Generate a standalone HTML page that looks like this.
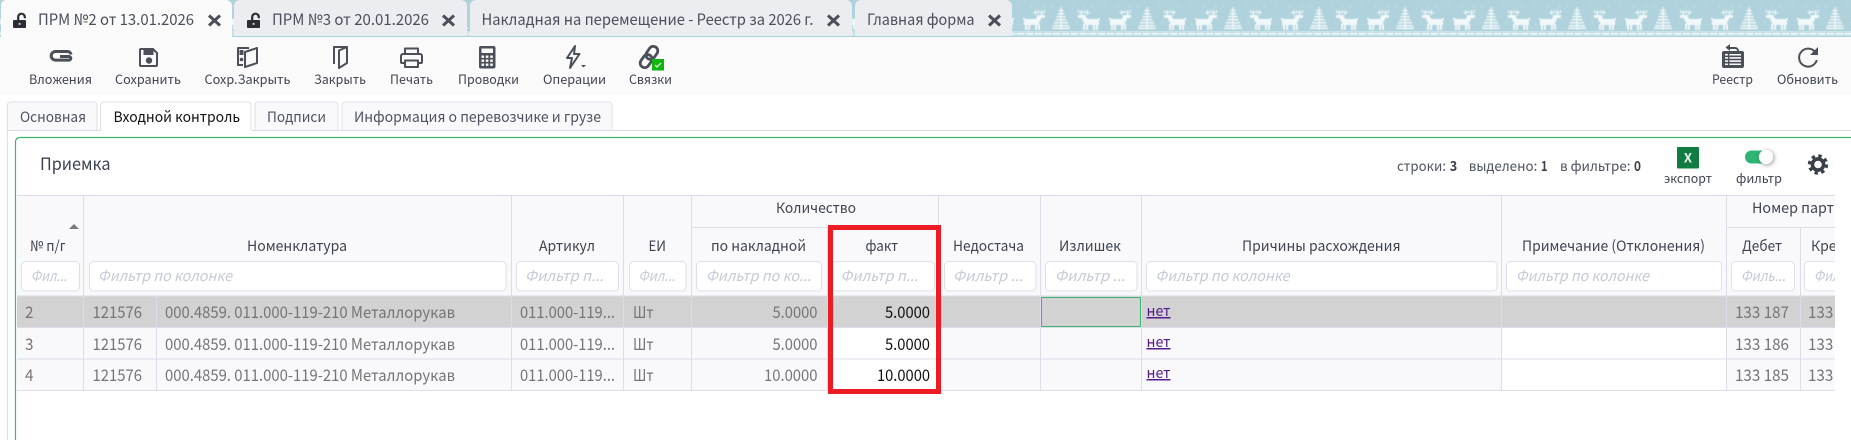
<!DOCTYPE html>
<html lang="ru"><head><meta charset="utf-8"><title>ПРМ №2 от 13.01.2026</title>
<style>
html,body{margin:0;padding:0;background:#fff;width:1851px;height:440px;overflow:hidden}
svg{display:block}
text{font-family:"Noto Sans CJK SC","Liberation Sans",sans-serif;white-space:pre}
.tt{font-size:15.5px;fill:#4a4f5b}
.tb{font-size:12.5px;fill:#3f4450}
.mt{font-size:14.5px;fill:#4d5360}
.th{font-size:14.5px;fill:#3f4450}
.ph{font-size:14.5px;fill:#c5cad6;font-style:italic}
.td{font-size:16px;fill:#757575}
.fa{font-size:16px;fill:#111}
.ln{font-size:15px;fill:#551a8b;text-decoration:underline}
.st{font-size:14px;fill:#4d5360}
.sb{font-size:14px;fill:#3a3f4a;font-weight:700}
.inp{fill:#fff;stroke:#dfe1ea;stroke-width:1}
.ic{fill:none;stroke:#4b4f58;stroke-width:2;stroke-linejoin:round}
.f{fill:#4b4f58}
.x{stroke:#4b4f58;stroke-width:3;fill:none}
</style></head><body>
<svg xmlns="http://www.w3.org/2000/svg" width="1851" height="440" viewBox="0 0 1851 440">
<defs>
<g id="d" fill="#f1f8fa">
<rect x="1" y="9" width="15" height="6"/><rect x="2" y="15" width="2" height="5"/><rect x="5" y="14" width="2" height="6"/><rect x="12" y="14" width="2" height="6"/><rect x="15" y="14" width="2" height="6"/>
<path d="M12 10L15 5H19L17 12Z"/><rect x="14" y="5" width="8" height="3"/><rect x="0" y="8" width="2" height="2"/>
<rect x="12" y="0" width="1.2" height="5"/><rect x="18" y="0" width="1.2" height="5"/><rect x="10" y="2" width="6" height="1"/><rect x="16" y="2" width="6" height="1"/><rect x="15" y="0" width="1" height="3"/><rect x="21" y="0" width="1" height="3"/>
</g>
<pattern id="p" width="86" height="37" patternUnits="userSpaceOnUse" x="17" y="0">
<g fill="#f1f8fa">
<rect x="11.5" y="7" width="1.2" height="23"/>
<rect x="9.5" y="10" width="5" height="1.5"/><rect x="8.5" y="13" width="7" height="1.5"/><rect x="7.5" y="16" width="9" height="1.5"/><rect x="6.5" y="19" width="11" height="1.5"/><rect x="5" y="22" width="14" height="1.5"/><rect x="4" y="25" width="16" height="1.5"/><rect x="3" y="27.5" width="18" height="1.5"/>
</g>
<use href="#d" transform="translate(51 10) scale(-1 1)"/>
<use href="#d" transform="translate(60 10)"/>
<g fill="#fff" opacity=".7"><rect x="2" y="6" width="1" height="1"/><rect x="24" y="5" width="1" height="1"/><rect x="35" y="7" width="1" height="1"/><rect x="55" y="5" width="1" height="1"/><rect x="27" y="22" width="1" height="1"/><rect x="56" y="24" width="1" height="1"/><rect x="80" y="6" width="1" height="1"/><rect x="43" y="6" width="1" height="1"/><rect x="68" y="6" width="1" height="1"/></g>
</pattern>
<pattern id="b" width="9" height="5" patternUnits="userSpaceOnUse" x="0" y="31">
<rect width="9" height="5" fill="#c9e2e8"/><rect x="0" y="2" width="7" height="1.4" fill="#eef7f9"/>
</pattern>
<clipPath id="tc"><rect x="17" y="195" width="1818" height="245"/></clipPath>
<clipPath id="c1"><rect x="17" y="230" width="48" height="30"/></clipPath>
</defs>

<!-- top tab bar -->
<rect x="0" y="0" width="1851" height="37" fill="#afd2dc"/>
<rect x="0" y="0" width="1851" height="31" fill="url(#p)" style="filter:blur(.45px)"/>
<rect x="0" y="31" width="1851" height="5" fill="url(#b)"/>
<rect x="0" y="36" width="1851" height="1" fill="#a9d3dc"/>

<path d="M1 36V5a5 5 0 0 1 5-5H226a6 6 0 0 1 6 6V37H1Z" fill="#fafafa"/>
<path d="M234 36V6a6 6 0 0 1 6-6H461a6 6 0 0 1 6 6V36Z" fill="#ecedf1"/>
<path d="M470 36V6a6 6 0 0 1 6-6H846a6 6 0 0 1 6 6V36Z" fill="#ecedf1"/>
<path d="M855 36V6a6 6 0 0 1 6-6H1006a6 6 0 0 1 6 6V36Z" fill="#ecedf1"/>

<g id="lk"><rect x="13" y="20" width="13" height="8" rx="1" fill="#2a2d34"/><path d="M18.2 20V17a3.3 3.3 0 0 1 6.6 0v1.2" fill="none" stroke="#2a2d34" stroke-width="2.2"/><rect x="18.7" y="23" width="1.8" height="1.8" fill="#ddd"/></g>
<use href="#lk" x="234"/>

<text class="tt" x="38" y="25" textLength="156" lengthAdjust="spacingAndGlyphs">ПРМ №2 от 13.01.2026</text>
<text class="tt" x="272" y="25" textLength="157" lengthAdjust="spacingAndGlyphs">ПРМ №3 от 20.01.2026</text>
<text class="tt" x="481.5" y="25" textLength="332" lengthAdjust="spacingAndGlyphs">Накладная на перемещение - Реестр за 2026 г.</text>
<text class="tt" x="867" y="25" textLength="107.5" lengthAdjust="spacingAndGlyphs">Главная форма</text>
<path class="x" d="M209 15.5l11 10m0-10l-11 10M443 15.5l11 10m0-10l-11 10M828 15.5l11 10m0-10l-11 10M989 15.5l11 10m0-10l-11 10"/>

<!-- toolbar -->
<rect x="0" y="37" width="1851" height="57" fill="#fafafa"/>
<path fill="none" stroke="#4b4f58" stroke-width="3" d="M60 56.5h9a1.8 1.8 0 0 1 0 3.6H55.5a4.3 4.3 0 0 1 0-8.6h12a3.5 3.5 0 0 1 3.5 3"/>
<path class="ic" stroke-width="2.2" d="M140 50a1 1 0 0 1 1-1h12l4 4v12a1 1 0 0 1-1 1h-15a1 1 0 0 1-1-1Z"/><rect class="f" x="143.5" y="50" width="10" height="5"/><circle class="f" cx="149" cy="60.5" r="3.2"/>
<path class="ic" stroke-width="2.2" d="M249 48H238V65H243"/><path class="ic" stroke-width="2.2" d="M245 52L257 48V63L245 67Z"/><rect class="f" x="239.5" y="50" width="4" height="5"/><circle class="f" cx="241.5" cy="59.5" r="1.8"/>
<path class="ic" stroke-width="2.2" d="M334 64V47H347V63L339 68V50.5L347 47"/>
<path class="ic" stroke-width="2.6" d="M405 53V48.5H418V53M405 63H402a1 1 0 0 1-1-1V56a2 2 0 0 1 2-2H420a2 2 0 0 1 2 2V62a1 1 0 0 1-1 1H418M405 60.5H418V67H405Z"/>
<rect class="f" x="479" y="46" width="16.5" height="22.5" rx="2"/><rect x="481.5" y="48.5" width="11.5" height="4.5" fill="#fafafa"/>
<g fill="#fafafa"><rect x="481.5" y="55.5" width="2.6" height="2.4"/><rect x="485.8" y="55.5" width="2.6" height="2.4"/><rect x="490.2" y="55.5" width="2.6" height="2.4"/><rect x="481.5" y="59.5" width="2.6" height="2.4"/><rect x="485.8" y="59.5" width="2.6" height="2.4"/><rect x="490.2" y="59.5" width="2.6" height="2.4"/><rect x="481.5" y="63.5" width="2.6" height="2.4"/><rect x="485.8" y="63.5" width="2.6" height="2.4"/><rect x="490.2" y="63.5" width="2.6" height="2.4"/></g>
<path class="ic" stroke-width="2.6" d="M575 46L567 58H572L570 68L579.5 54H574Z"/><path class="f" d="M581 65h5l-2.5 2.5Z"/>
<g transform="rotate(-55 649 57)" fill="none" stroke="#4b4f58" stroke-width="2.8"><rect x="637" y="52.5" width="14" height="9" rx="4.5"/><rect x="647" y="52.5" width="14" height="9" rx="4.5"/></g>
<rect x="652" y="59" width="12" height="11.5" fill="#0db50d"/><path d="M655 65l2 2 4-4" fill="none" stroke="#bff0bf" stroke-width="1.5"/>
<path class="f" d="M1730 44l-4.5 3.5 4.5 3.5v-2h5a2 2 0 0 1 2 2h2a4 4 0 0 0-4-4h-5Z"/><rect class="f" x="1722" y="51" width="22" height="17" rx="2"/><rect x="1725" y="54" width="16" height="11" fill="#fafafa"/><g class="f"><rect x="1725" y="55.5" width="16" height="1.6"/><rect x="1725" y="58.7" width="16" height="1.6"/><rect x="1725" y="61.9" width="16" height="1.6"/><rect x="1728" y="54" width="1.4" height="11"/></g>
<path class="ic" stroke-width="2.2" d="M1815.5 52.5A9 9 0 1 0 1816.8 60"/><path class="f" d="M1818 47v8h-8Z"/>

<g class="tb">
<text class="tb" x="29" y="84" textLength="63" lengthAdjust="spacingAndGlyphs">Вложения</text>
<text class="tb" x="115" y="84" textLength="66" lengthAdjust="spacingAndGlyphs">Сохранить</text>
<text class="tb" x="204.5" y="84" textLength="86" lengthAdjust="spacingAndGlyphs">Сохр.Закрыть</text>
<text class="tb" x="314" y="84" textLength="52" lengthAdjust="spacingAndGlyphs">Закрыть</text>
<text class="tb" x="390" y="84" textLength="43" lengthAdjust="spacingAndGlyphs">Печать</text>
<text class="tb" x="458" y="84" textLength="61" lengthAdjust="spacingAndGlyphs">Проводки</text>
<text class="tb" x="543" y="84" textLength="63" lengthAdjust="spacingAndGlyphs">Операции</text>
<text class="tb" x="629" y="84" textLength="43" lengthAdjust="spacingAndGlyphs">Связки</text>
<text class="tb" x="1712" y="84" textLength="41" lengthAdjust="spacingAndGlyphs">Реестр</text>
<text class="tb" x="1777" y="84" textLength="61" lengthAdjust="spacingAndGlyphs">Обновить</text>
</g>

<!-- main tabs -->
<rect x="0" y="94" width="1851" height="346" fill="#fff"/>
<rect x="7" y="130" width="1844" height="1" fill="#d8dbe6"/>
<rect x="7" y="130" width="1" height="310" fill="#dfe1ea"/>
<g fill="#f9f9fb" stroke="#dfe1ea"><path d="M7.5 130V105a3 3 0 0 1 3-3H94a3 3 0 0 1 3 3V130"/><path d="M255 130V105a3 3 0 0 1 3-3H335a3 3 0 0 1 3 3V130"/><path d="M342 130V105a3 3 0 0 1 3-3H609a3 3 0 0 1 3 3V130"/></g>
<path d="M100.5 131V105a3 3 0 0 1 3-3H248a3 3 0 0 1 3 3V131" fill="#fff" stroke="#dfe1ea"/><rect x="101" y="129" width="150" height="3" fill="#fff"/>
<text class="mt" x="20" y="122" textLength="66" lengthAdjust="spacingAndGlyphs">Основная</text>
<text class="mt" style="fill:#111" x="113.5" y="122" textLength="126.5" lengthAdjust="spacingAndGlyphs">Входной контроль</text>
<text class="mt" x="267" y="122" textLength="59" lengthAdjust="spacingAndGlyphs">Подписи</text>
<text class="mt" x="354" y="122" textLength="247" lengthAdjust="spacingAndGlyphs">Информация о перевозчике и грузе</text>

<!-- panel -->
<path d="M15.5 440V141.5a4 4 0 0 1 4-4H1851" fill="#fff" stroke="#3cb371" stroke-width="1.2"/>
<text style="font-size:17px;fill:#3a4150" x="40" y="170" textLength="70.5" lengthAdjust="spacingAndGlyphs">Приемка</text>

<text class="st" x="1397" y="171" textLength="49" lengthAdjust="spacingAndGlyphs">строки:</text><text class="sb" x="1449.7" y="171" textLength="7.5" lengthAdjust="spacingAndGlyphs">3</text>
<text class="st" x="1468.8" y="171" textLength="68.5" lengthAdjust="spacingAndGlyphs">выделено:</text><text class="sb" x="1541" y="171" textLength="6.5" lengthAdjust="spacingAndGlyphs">1</text>
<text class="st" x="1560" y="171" textLength="70.5" lengthAdjust="spacingAndGlyphs">в фильтре:</text><text class="sb" x="1634" y="171" textLength="7" lengthAdjust="spacingAndGlyphs">0</text>

<rect x="1677" y="147" width="22" height="21.5" rx="1" fill="#107c41"/>
<text x="1688" y="162.5" text-anchor="middle" style="font-size:13px;font-weight:700;fill:#e8f3ec">X</text>
<text class="tb" x="1664" y="183" textLength="48" lengthAdjust="spacingAndGlyphs">экспорт</text>
<rect x="1745" y="150.5" width="24" height="13" rx="6.5" fill="#2fb573"/>
<circle cx="1766" cy="157" r="7.2" fill="#fff" style="filter:drop-shadow(1px 1px 2px rgba(0,0,0,.4))"/>
<text class="tb" x="1736" y="183" textLength="46" lengthAdjust="spacingAndGlyphs">фильтр</text>
<circle cx="1818" cy="164.5" r="8.4" fill="none" stroke="#3a3f4a" stroke-width="3.6" stroke-dasharray="3.3 3.3"/>
<circle cx="1818" cy="164.5" r="5.6" fill="none" stroke="#3a3f4a" stroke-width="3.6"/>

<!-- table -->
<g clip-path="url(#tc)">
<rect x="17" y="195" width="1818" height="195" fill="#f9f9fb"/>
<rect x="17" y="296" width="1818" height="31" fill="#d2d2d2"/>
<rect x="828" y="327" width="110" height="63" fill="#fff"/><rect x="1502" y="327" width="224" height="63" fill="#fff"/>
<g fill="#dcdde8">
<rect x="17" y="195" width="1818" height="1"/><rect x="691" y="227" width="247" height="1"/><rect x="1726" y="227" width="109" height="1"/>
<rect x="17" y="295.5" width="1818" height="1"/><rect x="17" y="327" width="1818" height="1"/><rect x="17" y="358.5" width="1818" height="1"/><rect x="17" y="390" width="1818" height="1"/>
<rect x="83" y="195" width="1" height="195"/><rect x="156" y="296" width="1" height="94"/><rect x="511" y="195" width="1" height="195"/><rect x="623" y="195" width="1" height="195"/><rect x="691" y="195" width="1" height="195"/><rect x="827" y="227" width="1" height="163"/><rect x="938" y="195" width="1" height="195"/><rect x="1040" y="195" width="1" height="195"/><rect x="1141" y="195" width="1" height="195"/><rect x="1501" y="195" width="1" height="195"/><rect x="1726" y="195" width="1" height="195"/><rect x="1800" y="227" width="1" height="163"/>
</g>

<path d="M69 229l5-5 5 5Z" fill="#777"/>
<g clip-path="url(#c1)"><text class="th" x="30" y="251" textLength="38" lengthAdjust="spacingAndGlyphs">№ п/п</text></g>
<text class="th" x="247" y="251" textLength="100" lengthAdjust="spacingAndGlyphs">Номенклатура</text>
<text class="th" x="539" y="251" textLength="56" lengthAdjust="spacingAndGlyphs">Артикул</text>
<text class="th" x="648.5" y="251" textLength="17.5" lengthAdjust="spacingAndGlyphs">ЕИ</text>
<text class="th" x="776" y="213" textLength="80" lengthAdjust="spacingAndGlyphs">Количество</text>
<text class="th" x="711" y="251" textLength="95" lengthAdjust="spacingAndGlyphs">по накладной</text>
<text class="th" x="865.5" y="251" textLength="32.5" lengthAdjust="spacingAndGlyphs">факт</text>
<text class="th" x="953" y="251" textLength="71" lengthAdjust="spacingAndGlyphs">Недостача</text>
<text class="th" x="1059" y="251" textLength="62" lengthAdjust="spacingAndGlyphs">Излишек</text>
<text class="th" x="1242" y="251" textLength="158.5" lengthAdjust="spacingAndGlyphs">Причины расхождения</text>
<text class="th" x="1522" y="251" textLength="183" lengthAdjust="spacingAndGlyphs">Примечание (Отклонения)</text>
<text class="th" x="1752" y="213" textLength="100" lengthAdjust="spacingAndGlyphs">Номер партии</text>
<text class="th" x="1742" y="251" textLength="40" lengthAdjust="spacingAndGlyphs">Дебет</text>
<text class="th" x="1811" y="251" textLength="50" lengthAdjust="spacingAndGlyphs">Кредит</text>

<g>
<rect class="inp" x="21.5" y="261.5" width="58" height="29.5" rx="4"/>
<rect class="inp" x="89.5" y="261.5" width="416.5" height="29.5" rx="4"/>
<rect class="inp" x="516.5" y="261.5" width="102" height="29.5" rx="4"/>
<rect class="inp" x="629.5" y="261.5" width="56.5" height="29.5" rx="4"/>
<rect class="inp" x="696.5" y="261.5" width="125" height="29.5" rx="4"/>
<rect class="inp" x="832" y="261.5" width="102.5" height="29.5" rx="4"/>
<rect class="inp" x="944.5" y="261.5" width="91.5" height="29.5" rx="4"/>
<rect class="inp" x="1045.5" y="261.5" width="91.5" height="29.5" rx="4"/>
<rect class="inp" x="1146.5" y="261.5" width="350.5" height="29.5" rx="4"/>
<rect class="inp" x="1506.5" y="261.5" width="215" height="29.5" rx="4"/>
<rect class="inp" x="1731.5" y="261.5" width="63" height="29.5" rx="4"/>
<rect class="inp" x="1804.5" y="261.5" width="63" height="29.5" rx="4"/>
</g>
<text class="ph" x="31" y="281" textLength="36" lengthAdjust="spacingAndGlyphs">Фил...</text>
<text class="ph" x="98" y="281" textLength="134" lengthAdjust="spacingAndGlyphs">Фильтр по колонке</text>
<text class="ph" x="525" y="281" textLength="78.5" lengthAdjust="spacingAndGlyphs">Фильтр п...</text>
<text class="ph" x="638.5" y="281" textLength="36.5" lengthAdjust="spacingAndGlyphs">Фил...</text>
<text class="ph" x="706" y="281" textLength="105" lengthAdjust="spacingAndGlyphs">Фильтр по ко...</text>
<text class="ph" x="840.5" y="281" textLength="77.5" lengthAdjust="spacingAndGlyphs">Фильтр п...</text>
<text class="ph" x="953" y="281" textLength="70" lengthAdjust="spacingAndGlyphs">Фильтр ...</text>
<text class="ph" x="1055" y="281" textLength="70" lengthAdjust="spacingAndGlyphs">Фильтр ...</text>
<text class="ph" x="1155.5" y="281" textLength="134" lengthAdjust="spacingAndGlyphs">Фильтр по колонке</text>
<text class="ph" x="1516" y="281" textLength="133" lengthAdjust="spacingAndGlyphs">Фильтр по колонке</text>
<text class="ph" x="1741" y="281" textLength="44.5" lengthAdjust="spacingAndGlyphs">Филь...</text>
<text class="ph" x="1814" y="281" textLength="36" lengthAdjust="spacingAndGlyphs">Фил...</text>

<rect x="1041.5" y="297.5" width="99" height="29" fill="none" stroke="#3cb371" stroke-width="1"/>

<!-- row 1 -->
<text class="td" x="25" y="318" textLength="8.5" lengthAdjust="spacingAndGlyphs">2</text>
<text class="td" x="92.5" y="318" textLength="49.5" lengthAdjust="spacingAndGlyphs">121576</text>
<text class="td" x="165" y="318" textLength="290" lengthAdjust="spacingAndGlyphs">000.4859. 011.000-119-210 Металлорукав</text>
<text class="td" x="520" y="318" textLength="95" lengthAdjust="spacingAndGlyphs">011.000-119...</text>
<text class="td" x="633" y="318" textLength="20.5" lengthAdjust="spacingAndGlyphs">Шт</text>
<text class="td" x="772.5" y="318" textLength="45" lengthAdjust="spacingAndGlyphs">5.0000</text>
<text class="fa" x="885" y="318" textLength="45" lengthAdjust="spacingAndGlyphs">5.0000</text>
<text class="ln" x="1146.5" y="316" textLength="24" lengthAdjust="spacingAndGlyphs">нет</text>
<text class="td" x="1735" y="318" textLength="54" lengthAdjust="spacingAndGlyphs">133 187</text>
<text class="td" x="1808" y="318" textLength="54" lengthAdjust="spacingAndGlyphs">133 187</text>
<!-- row 2 -->
<text class="td" x="25" y="350" textLength="8.5" lengthAdjust="spacingAndGlyphs">3</text>
<text class="td" x="92.5" y="350" textLength="49.5" lengthAdjust="spacingAndGlyphs">121576</text>
<text class="td" x="165" y="350" textLength="290" lengthAdjust="spacingAndGlyphs">000.4859. 011.000-119-210 Металлорукав</text>
<text class="td" x="520" y="350" textLength="95" lengthAdjust="spacingAndGlyphs">011.000-119...</text>
<text class="td" x="633" y="350" textLength="20.5" lengthAdjust="spacingAndGlyphs">Шт</text>
<text class="td" x="772.5" y="350" textLength="45" lengthAdjust="spacingAndGlyphs">5.0000</text>
<text class="fa" x="885" y="350" textLength="45" lengthAdjust="spacingAndGlyphs">5.0000</text>
<text class="ln" x="1146.5" y="347" textLength="24" lengthAdjust="spacingAndGlyphs">нет</text>
<text class="td" x="1735" y="350" textLength="54" lengthAdjust="spacingAndGlyphs">133 186</text>
<text class="td" x="1808" y="350" textLength="54" lengthAdjust="spacingAndGlyphs">133 186</text>
<!-- row 3 -->
<text class="td" x="25" y="381" textLength="8.5" lengthAdjust="spacingAndGlyphs">4</text>
<text class="td" x="92.5" y="381" textLength="49.5" lengthAdjust="spacingAndGlyphs">121576</text>
<text class="td" x="165" y="381" textLength="290" lengthAdjust="spacingAndGlyphs">000.4859. 011.000-119-210 Металлорукав</text>
<text class="td" x="520" y="381" textLength="95" lengthAdjust="spacingAndGlyphs">011.000-119...</text>
<text class="td" x="633" y="381" textLength="20.5" lengthAdjust="spacingAndGlyphs">Шт</text>
<text class="td" x="764" y="381" textLength="53.5" lengthAdjust="spacingAndGlyphs">10.0000</text>
<text class="fa" x="877" y="381" textLength="53" lengthAdjust="spacingAndGlyphs">10.0000</text>
<text class="ln" x="1146.5" y="378" textLength="24" lengthAdjust="spacingAndGlyphs">нет</text>
<text class="td" x="1735" y="381" textLength="54" lengthAdjust="spacingAndGlyphs">133 185</text>
<text class="td" x="1808" y="381" textLength="54" lengthAdjust="spacingAndGlyphs">133 185</text>
</g>

<!-- red highlight -->
<rect x="830.5" y="227.5" width="108" height="164" fill="none" stroke="#ed1c24" stroke-width="5"/>
</svg>
</body></html>
